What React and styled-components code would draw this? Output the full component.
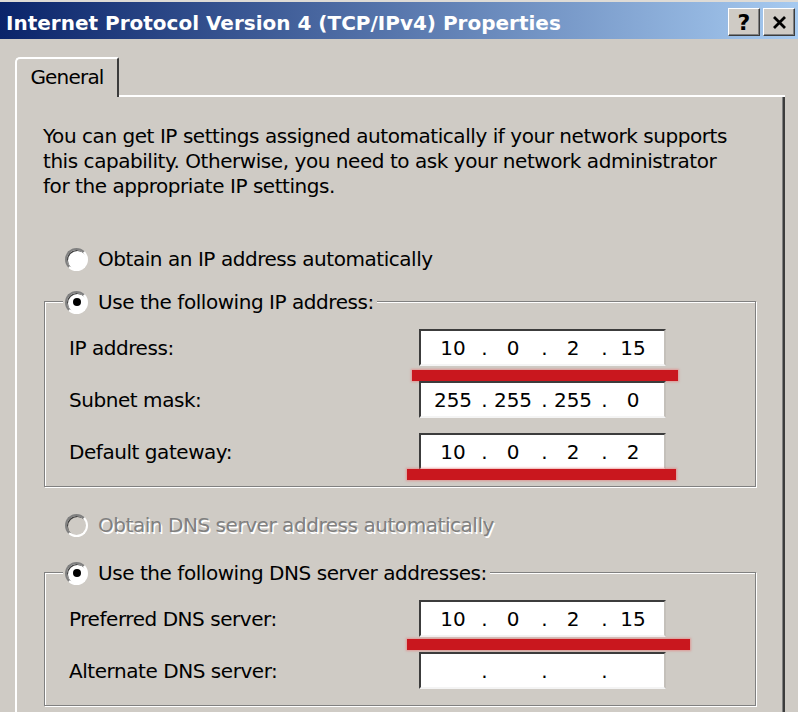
import React from 'react';
import styled, { createGlobalStyle } from 'styled-components';

const FACE = '#cfcbc5';
const SHADOW = '#808080';
const DARK = '#3c3c3c';
const RED = '#c9171e';

const GlobalStyle = createGlobalStyle`
  html, body {
    margin: 0;
    padding: 0;
    background: ${FACE};
  }
`;

const Window = styled.div`
  width: 798px;
  height: 712px;
  overflow: hidden;
  box-sizing: border-box;
  border-top: 2px solid #dedbd6;
  background: ${FACE};
  display: flex;
  flex-direction: column;
  font-family: "DejaVu Sans", Tahoma, sans-serif;
  font-size: 20px;
  letter-spacing: -0.45px;
  color: #000;
`;

const TitleBar = styled.div`
  height: 37px;
  flex-shrink: 0;
  box-sizing: border-box;
  padding: 3px 3px 0 6px;
  display: flex;
  align-items: center;
  justify-content: space-between;
  background: linear-gradient(to right, #0a246a, #a6caf0);
`;

const Title = styled.span`
  color: #fff;
  font-weight: bold;
  font-size: 20px;
  letter-spacing: 0;
  white-space: nowrap;
  padding-top: 2px;
`;

const CaptionButtons = styled.div`
  display: flex;
  gap: 3px;
`;

const CaptionButton = styled.div`
  width: 32px;
  height: 28px;
  box-sizing: border-box;
  background: ${FACE};
  border: 1px solid;
  border-color: #fff ${DARK} ${DARK} #fff;
  box-shadow: inset -1px -1px 0 ${SHADOW};
  display: flex;
  align-items: center;
  justify-content: center;
  font-weight: bold;
  font-size: 22px;
  letter-spacing: 0;
`;

const Body = styled.div`
  flex: 1;
  min-height: 0;
  padding: 18px 13px 0 15px;
  display: flex;
  flex-direction: column;
`;

const TabRow = styled.div`
  height: 40px;
  flex-shrink: 0;
  display: flex;
`;

const Tab = styled.div`
  width: 104px;
  box-sizing: border-box;
  border-top: 2px solid #fff;
  border-left: 2px solid #fff;
  border-right: 2px solid ${DARK};
  border-top-left-radius: 5px;
  border-top-right-radius: 2px;
  display: flex;
  align-items: center;
  justify-content: center;
  padding-bottom: 3px;
  letter-spacing: -0.8px;
`;

const TabFill = styled.div`
  flex: 1;
  border-bottom: 2px solid #fff;
`;

const Panel = styled.div`
  flex: 1;
  border-left: 2px solid #fff;
  border-right: 2px solid ${DARK};
  box-shadow: inset -1px 0 0 ${SHADOW};
  padding: 27px 0 0 26px;
`;

const Intro = styled.p`
  margin: 0;
  line-height: 25px;
  white-space: nowrap;
`;

const RadioRow = styled.div`
  height: 26px;
  display: flex;
  align-items: center;
  gap: 10px;
  margin: ${p => p.$mt}px 0 0 22px;
  white-space: nowrap;
  color: ${p => (p.$disabled ? SHADOW : '#000')};
  text-shadow: ${p => (p.$disabled ? '1.5px 1.5px 0 #fff' : 'none')};
`;

const RadioCircle = styled.span`
  width: 23px;
  height: 23px;
  flex-shrink: 0;
  box-sizing: border-box;
  border-radius: 50%;
  border: 2px solid;
  border-color: ${SHADOW} #fff #fff ${SHADOW};
  background: ${p => (p.$disabled ? FACE : '#fff')};
  box-shadow: inset 1px 1px 0 ${DARK};
  display: flex;
  align-items: center;
  justify-content: center;

  &::after {
    content: '';
    display: ${p => (p.$checked ? 'block' : 'none')};
    width: 8px;
    height: 8px;
    border-radius: 50%;
    background: #000;
  }
`;

const GroupBox = styled.div`
  width: 712px;
  box-sizing: border-box;
  margin: ${p => p.$mt}px 0 0 1px;
  border: 1px solid ${SHADOW};
  box-shadow: inset 1px 1px 0 #fff, 1px 1px 0 #fff;
  padding-bottom: 16px;
  display: flex;
  flex-direction: column;
`;

const GroupHeader = styled(RadioRow)`
  align-self: flex-start;
  margin: -13px 0 0 18px;
  padding: 0 3px 0 2px;
  background: ${FACE};
`;

const FieldGrid = styled.div`
  display: grid;
  grid-template-columns: 350px 247px;
  row-gap: 15px;
  align-items: center;
  padding: 14px 0 0 24px;
`;

const Label = styled.span`
  white-space: nowrap;
`;

const FieldWrap = styled.div`
  position: relative;
`;

const IpBox = styled.div`
  height: 37px;
  box-sizing: border-box;
  background: #fff;
  border: 2px solid;
  border-color: ${DARK} #c4c0ba #f4f4f4 ${DARK};
  padding-left: 8px;
  display: grid;
  grid-template-columns: 48px 12px 48px 12px 48px 12px 48px;
  align-items: center;
  letter-spacing: 0;
`;

const Octet = styled.span`
  text-align: center;
`;

const Dot = styled.span`
  text-align: center;
  padding-left: 3px;
`;

// red marker stroke drawn over the address boxes
const Mark = styled.div`
  position: absolute;
  height: 11px;
  background: ${RED};
  box-shadow: 0 0 2px 1px rgba(235, 110, 110, 0.55);
`;

const IpField = ({ value, mark }) => {
  const parts = value ? value.split('.') : ['', '', '', ''];
  return (
    <FieldWrap>
      <IpBox>
        {parts.map((part, i) => (
          <React.Fragment key={i}>
            {i > 0 && <Dot>.</Dot>}
            <Octet>{part}</Octet>
          </React.Fragment>
        ))}
      </IpBox>
      {mark && (
        <Mark
          style={{ left: mark.left, top: mark.top, width: mark.width }}
        />
      )}
    </FieldWrap>
  );
};

const CloseGlyph = () => (
  <svg width="15" height="13" viewBox="0 0 15 13">
    <path d="M2 1 L13 12 M13 1 L2 12" stroke="#000" strokeWidth="2.8" />
  </svg>
);

const Radio = ({ checked, disabled, children, mt }) => (
  <RadioRow $mt={mt} $disabled={disabled}>
    <RadioCircle $checked={checked} $disabled={disabled} />
    <span>{children}</span>
  </RadioRow>
);

const ipRows = [
  { label: 'IP address:', value: '10.0.2.15', mark: { left: -7, top: 41, width: 266 } },
  { label: 'Subnet mask:', value: '255.255.255.0' },
  { label: 'Default gateway:', value: '10.0.2.2', mark: { left: -12, top: 36, width: 269 } },
];

const dnsRows = [
  { label: 'Preferred DNS server:', value: '10.0.2.15', mark: { left: -12, top: 39, width: 283 } },
  { label: 'Alternate DNS server:', value: '' },
];

const Fields = ({ rows }) => (
  <FieldGrid>
    {rows.map(row => (
      <React.Fragment key={row.label}>
        <Label>{row.label}</Label>
        <IpField value={row.value} mark={row.mark} />
      </React.Fragment>
    ))}
  </FieldGrid>
);

export default function App() {
  return (
    <>
      <GlobalStyle />
      <Window>
        <TitleBar>
          <Title>Internet Protocol Version 4 (TCP/IPv4) Properties</Title>
          <CaptionButtons>
            <CaptionButton>?</CaptionButton>
            <CaptionButton>
              <CloseGlyph />
            </CaptionButton>
          </CaptionButtons>
        </TitleBar>

        <Body>
          <TabRow>
            <Tab>General</Tab>
            <TabFill />
          </TabRow>

          <Panel>
            <Intro>
              You can get IP settings assigned automatically if your network supports
              <br />
              this capability. Otherwise, you need to ask your network administrator
              <br />
              for the appropriate IP settings.
            </Intro>

            <Radio mt={47}>Obtain an IP address automatically</Radio>

            <GroupBox $mt={29}>
              <GroupHeader $mt={0}>
                <RadioCircle $checked />
                <span>Use the following IP address:</span>
              </GroupHeader>
              <Fields rows={ipRows} />
            </GroupBox>

            <Radio mt={25} disabled>
              Obtain DNS server address automatically
            </Radio>

            <GroupBox $mt={34}>
              <GroupHeader $mt={0}>
                <RadioCircle $checked />
                <span>Use the following DNS server addresses:</span>
              </GroupHeader>
              <Fields rows={dnsRows} />
            </GroupBox>
          </Panel>
        </Body>
      </Window>
    </>
  );
}
